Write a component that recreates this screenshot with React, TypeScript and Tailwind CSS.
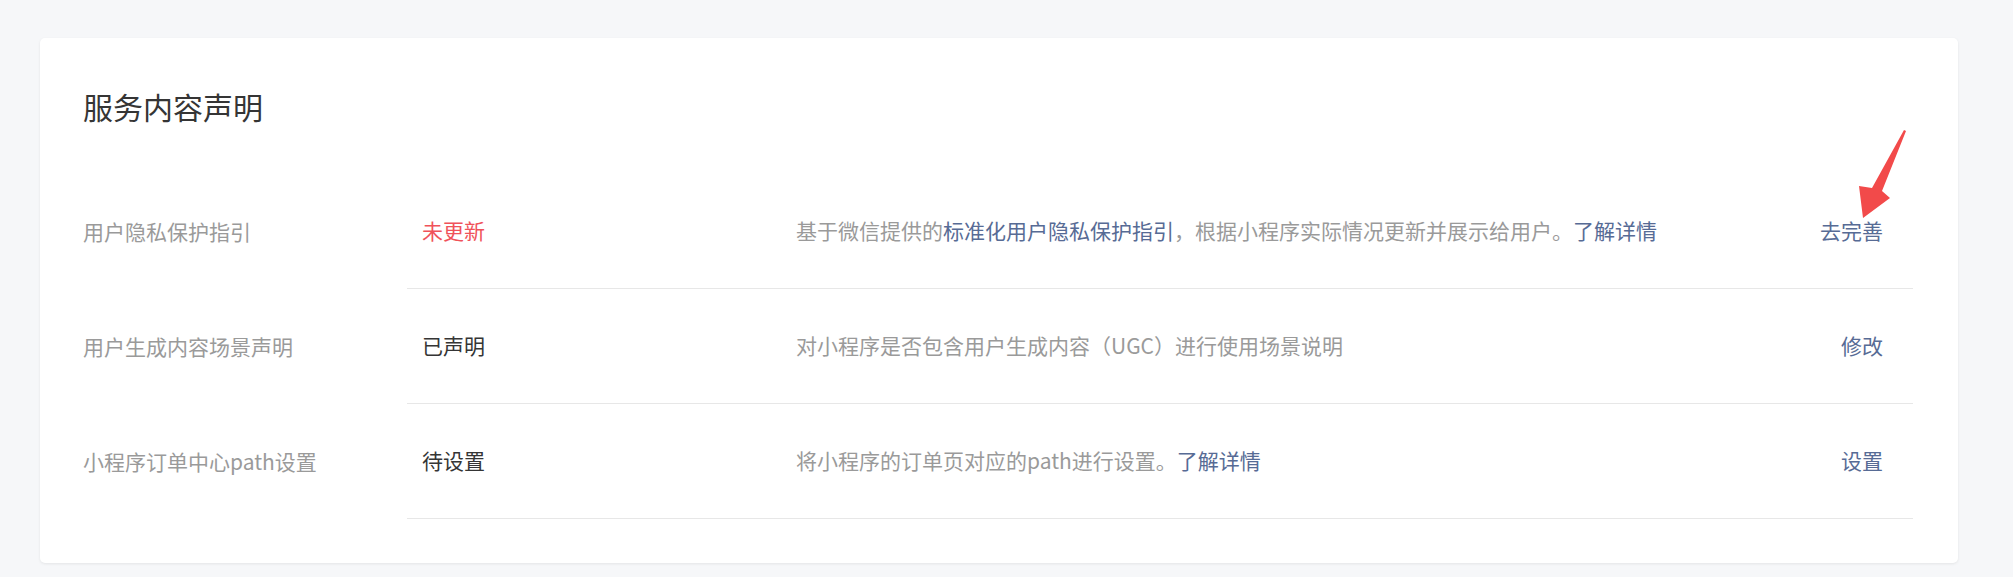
import React from "react";

type Row = {
  label: string;
  status: string;
  statusColor: string;
  desc: React.ReactNode;
  action: string;
};

const Link: React.FC<{ children: React.ReactNode }> = ({ children }) => (
  <a className="text-[#576b95] cursor-pointer">{children}</a>
);

const rows: Row[] = [
  {
    label: "用户隐私保护指引",
    status: "未更新",
    statusColor: "text-[#f0525a]",
    desc: (
      <>
        基于微信提供的<Link>标准化用户隐私保护指引</Link>，根据小程序实际情况更新并展示给用户。
        <Link>了解详情</Link>
      </>
    ),
    action: "去完善",
  },
  {
    label: "用户生成内容场景声明",
    status: "已声明",
    statusColor: "text-[#353535]",
    desc: "对小程序是否包含用户生成内容（UGC）进行使用场景说明",
    action: "修改",
  },
  {
    label: "小程序订单中心path设置",
    status: "待设置",
    statusColor: "text-[#353535]",
    desc: (
      <>
        将小程序的订单页对应的path进行设置。<Link>了解详情</Link>
      </>
    ),
    action: "设置",
  },
];

export default function App() {
  return (
    <div
      className="h-[577px] bg-[#f6f7f9] pl-[40px] pr-[55px] pt-[38px]"
      style={{ fontFamily: '"Noto Sans CJK SC", "Noto Sans", sans-serif' }}
    >
      <div className="relative bg-white rounded-[5px] shadow-[0_1px_3px_rgba(0,0,0,0.08)] pl-[43px] pr-[45px] pt-[48px] pb-[44px]">
        {/* Title */}
        <h2 className="text-[30px] leading-[40px] text-[#353535] font-normal">
          服务内容声明
        </h2>

        {/* Rows */}
        <div className="mt-[48px] flex flex-col">
          {rows.map((r) => (
            <div key={r.label} className="flex">
              <div className="w-[324px] shrink-0 flex items-center text-[21px] text-[#9a9a9a]">
                {r.label}
              </div>
              <div className="flex-1 flex items-center h-[115px] border-b border-[#e7e7e7] text-[21px]">
                <div className={`w-[389px] shrink-0 pl-[15px] ${r.statusColor}`}>
                  {r.status}
                </div>
                <div className="flex-1 text-[#9a9a9a]">{r.desc}</div>
                <div className="pr-[30px] text-[#576b95] cursor-pointer">
                  {r.action}
                </div>
              </div>
            </div>
          ))}
        </div>

        {/* Red annotation arrow */}
        <svg
          className="absolute left-[1815px] top-[90px]"
          width="55"
          height="95"
          viewBox="0 0 55 95"
        >
          <polygon
            points="51,3 27,63 35,70 8,90 4,58 17,60 49,2"
            fill="#f24a4a"
          />
        </svg>
      </div>
    </div>
  );
}
